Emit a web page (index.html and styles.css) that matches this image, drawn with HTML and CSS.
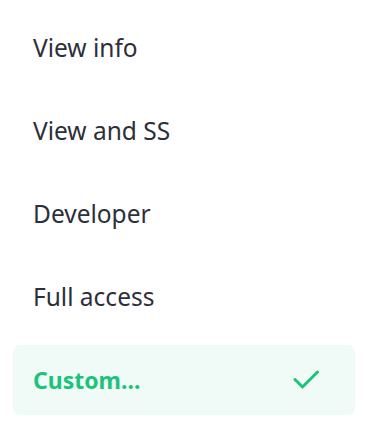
FILE: index.html
```html
<!DOCTYPE html>
<html>
<head>
<meta charset="utf-8">
<link rel="stylesheet" href="styles.css">
</head>
<body>
<ul class="menu">
  <li class="item">View info</li>
  <li class="item">View and SS</li>
  <li class="item">Developer</li>
  <li class="item">Full access</li>
  <li class="item selected">
    <span>Custom...</span>
    <svg class="check" width="26" height="20" viewBox="0 0 26 20"><path d="M2 9.5 L9.5 17 L24.5 2" fill="none" stroke="#1dc27b" stroke-width="3" stroke-linecap="round" stroke-linejoin="round"/></svg>
  </li>
</ul>
</body>
</html>
```
FILE: styles.css
```css
html, body {
  margin: 0;
  padding: 0;
  background: #ffffff;
}
body {
  font-family: "Noto Sans", "Open Sans", sans-serif;
}
.menu {
  list-style: none;
  margin: 0;
  padding: 12px 12px 0 13px;
  display: flex;
  flex-direction: column;
  gap: 13.3px;
  width: 342px;
}
.item {
  height: 70px;
  display: flex;
  align-items: center;
  justify-content: space-between;
  padding: 0 36px 0 20px;
  font-size: 24.5px;
  color: #2d2f3a;
  border-radius: 7px;
}
.selected {
  background: #f0fbf7;
  color: #1dc27b;
  font-weight: 700;
  font-size: 23px;
}
.check {
  display: block;
}
```
